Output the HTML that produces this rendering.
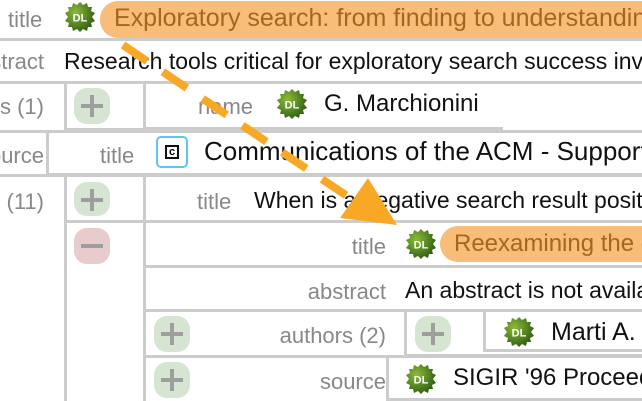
<!DOCTYPE html>
<html><head><meta charset="utf-8"><style>
*{margin:0;padding:0;box-sizing:border-box}
html,body{width:642px;height:401px;overflow:hidden}
body{background:#fff;font-family:"Liberation Sans",sans-serif;font-size:23px;position:relative}
.a{position:absolute;white-space:nowrap}
.h{position:absolute;background:#ccc;height:3px}
.v{position:absolute;background:#ccc;width:3px}
.lb{color:#888;font-size:22px}
.tx{color:#111}
.clip{position:absolute;overflow:hidden;white-space:nowrap}
.lc{position:absolute;left:0;width:44px;overflow:hidden;white-space:nowrap;direction:rtl;color:#888;font-size:22px}
.lc span{direction:ltr;unicode-bidi:isolate}
.pl{position:absolute;width:36px;height:36px;border-radius:13px;background:#d6e4d2}
.pl:before{content:"";position:absolute;left:7px;top:16px;width:22px;height:4px;background:#9e9e9e}
.pl:after{content:"";position:absolute;left:16px;top:7px;width:4px;height:22px;background:#9e9e9e}
.mi{background:#e8cbcb}.mi:after{display:none}
.pill{position:absolute;background:#f8bd79;border-radius:18px 0 0 18px;color:#a5671f;padding-left:14px;white-space:nowrap;overflow:hidden}
.bx{position:absolute;border:3px solid #ccc;border-right:none}
</style></head><body>
<svg width="0" height="0" style="position:absolute"><defs>
<radialGradient id="g" cx="0.35" cy="0.35" r="0.7"><stop offset="0" stop-color="#8dbb3a"/><stop offset="1" stop-color="#2e5e12"/></radialGradient>
<symbol id="dl" viewBox="0 0 32 32"><polygon fill="url(#g)" points="16,1 19,4 23,2 24,6 28,6 27,10 31,12 28,16 31,20 27,22 28,26 24,26 23,30 19,28 16,31 13,28 9,30 8,26 4,26 5,22 1,20 4,16 1,12 5,10 4,6 8,6 9,2 13,4"/><text x="16" y="20.5" font-family="Liberation Sans" font-weight="bold" font-size="11" fill="#fff" text-anchor="middle">DL</text></symbol>
</defs></svg>

<div class="h" style="left:0;top:38px;width:642px"></div>
<div class="h" style="left:0;top:81px;width:642px"></div>
<div class="bx" style="left:64px;top:81px;width:82px;height:50px;border-top:none;border-right:3px solid #ccc"></div>
<div class="bx" style="left:143px;top:81px;width:360px;height:49px;border-top:none;border-right:none"></div>
<div class="h" style="left:0;top:130px;width:642px"></div>
<div class="bx" style="left:46px;top:130px;width:596px;height:46px;border-top:none"></div>
<div class="h" style="left:0;top:174px;width:642px"></div>
<div class="v" style="left:64px;top:176px;height:225px"></div>
<div class="v" style="left:143px;top:176px;height:225px"></div>
<div class="bx" style="left:143px;top:176px;width:499px;height:47px;border-top:none"></div>
<div class="h" style="left:64px;top:220px;width:578px"></div>
<div class="h" style="left:143px;top:265px;width:499px"></div>
<div class="h" style="left:143px;top:309px;width:499px"></div>
<div class="bx" style="left:404px;top:309px;width:238px;height:48px"></div>
<div class="bx" style="left:483px;top:309px;width:159px;height:43px;border-top:none"></div>
<div class="h" style="left:143px;top:355px;width:499px"></div>
<div class="v" style="left:386px;top:357px;height:44px"></div>
<div class="h" style="left:386px;top:398px;width:256px"></div>

<div class="a lb" style="left:8px;top:7px">title</div>
<svg class="a" style="left:64px;top:1px" width="32" height="32"><use href="#dl"/></svg>
<div class="pill" style="left:100px;top:1px;width:542px;height:37px;line-height:35px;font-size:25px">Exploratory search: from finding to understanding</div>

<div class="lc" style="top:49px"><span>abstract</span></div>
<div class="clip tx" style="left:64px;top:48px;width:578px">Research tools critical for exploratory search success involve</div>

<div class="lc" style="top:94px"><span>authors (1)</span></div>
<div class="pl" style="left:74px;top:88px"></div>
<div class="a lb" style="left:198px;top:94px">name</div>
<svg class="a" style="left:276px;top:88px" width="32" height="32"><use href="#dl"/></svg>
<div class="a tx" style="left:324px;top:90px;font-size:24px">G. Marchionini</div>

<div class="lc" style="top:143px"><span>source</span></div>
<div class="a lb" style="left:100px;top:143px">title</div>
<div class="a" style="left:156px;top:136px;width:32px;height:32px;border:2px solid #5bc7ee;border-radius:5px"><div style="position:absolute;left:7px;top:7px;width:14px;height:14px;border:2px solid #111;font-size:11px;font-weight:bold;line-height:10px;text-align:center">c</div></div>
<div class="clip tx" style="left:204px;top:136px;width:438px;font-size:26px">Communications of the ACM - Supporting</div>

<div class="lc" style="top:189px"><span>results (11)</span></div>
<div class="pl" style="left:74px;top:182px;height:34px"></div>
<div class="a lb" style="left:197px;top:189px">title</div>
<div class="clip tx" style="left:254px;top:187px;width:388px">When is a negative search result positive</div>

<div class="pl mi" style="left:74px;top:228px"></div>
<div class="a lb" style="right:256px;top:234px">title</div>
<svg class="a" style="left:405px;top:228px" width="32" height="32"><use href="#dl"/></svg>
<div class="pill" style="left:440px;top:226px;width:202px;height:36px;line-height:35px;font-size:24px">Reexamining the cluster</div>

<div class="a lb" style="right:256px;top:279px">abstract</div>
<div class="clip tx" style="left:405px;top:277px;width:237px">An abstract is not available</div>

<div class="pl" style="left:154px;top:316px"></div>
<div class="a lb" style="right:256px;top:323px">authors (2)</div>
<div class="pl" style="left:415px;top:316px"></div>
<svg class="a" style="left:503px;top:316px" width="32" height="32"><use href="#dl"/></svg>
<div class="clip tx" style="left:551px;top:318px;width:91px;font-size:25px">Marti A. Hearst</div>

<div class="pl" style="left:154px;top:362px"></div>
<div class="a lb" style="right:256px;top:369px">source</div>
<svg class="a" style="left:405px;top:363px" width="32" height="32"><use href="#dl"/></svg>
<div class="clip tx" style="left:453px;top:364px;width:189px;font-size:24px">SIGIR '96 Proceedings</div>

<svg class="a" style="left:0;top:0" width="642" height="401">
<line x1="123" y1="45" x2="350" y2="198" stroke="#f9a825" stroke-width="8" stroke-dasharray="29,19"/>
<polygon points="340,218 368,178 397,225" fill="#f9a825"/>
</svg>
</body></html>
